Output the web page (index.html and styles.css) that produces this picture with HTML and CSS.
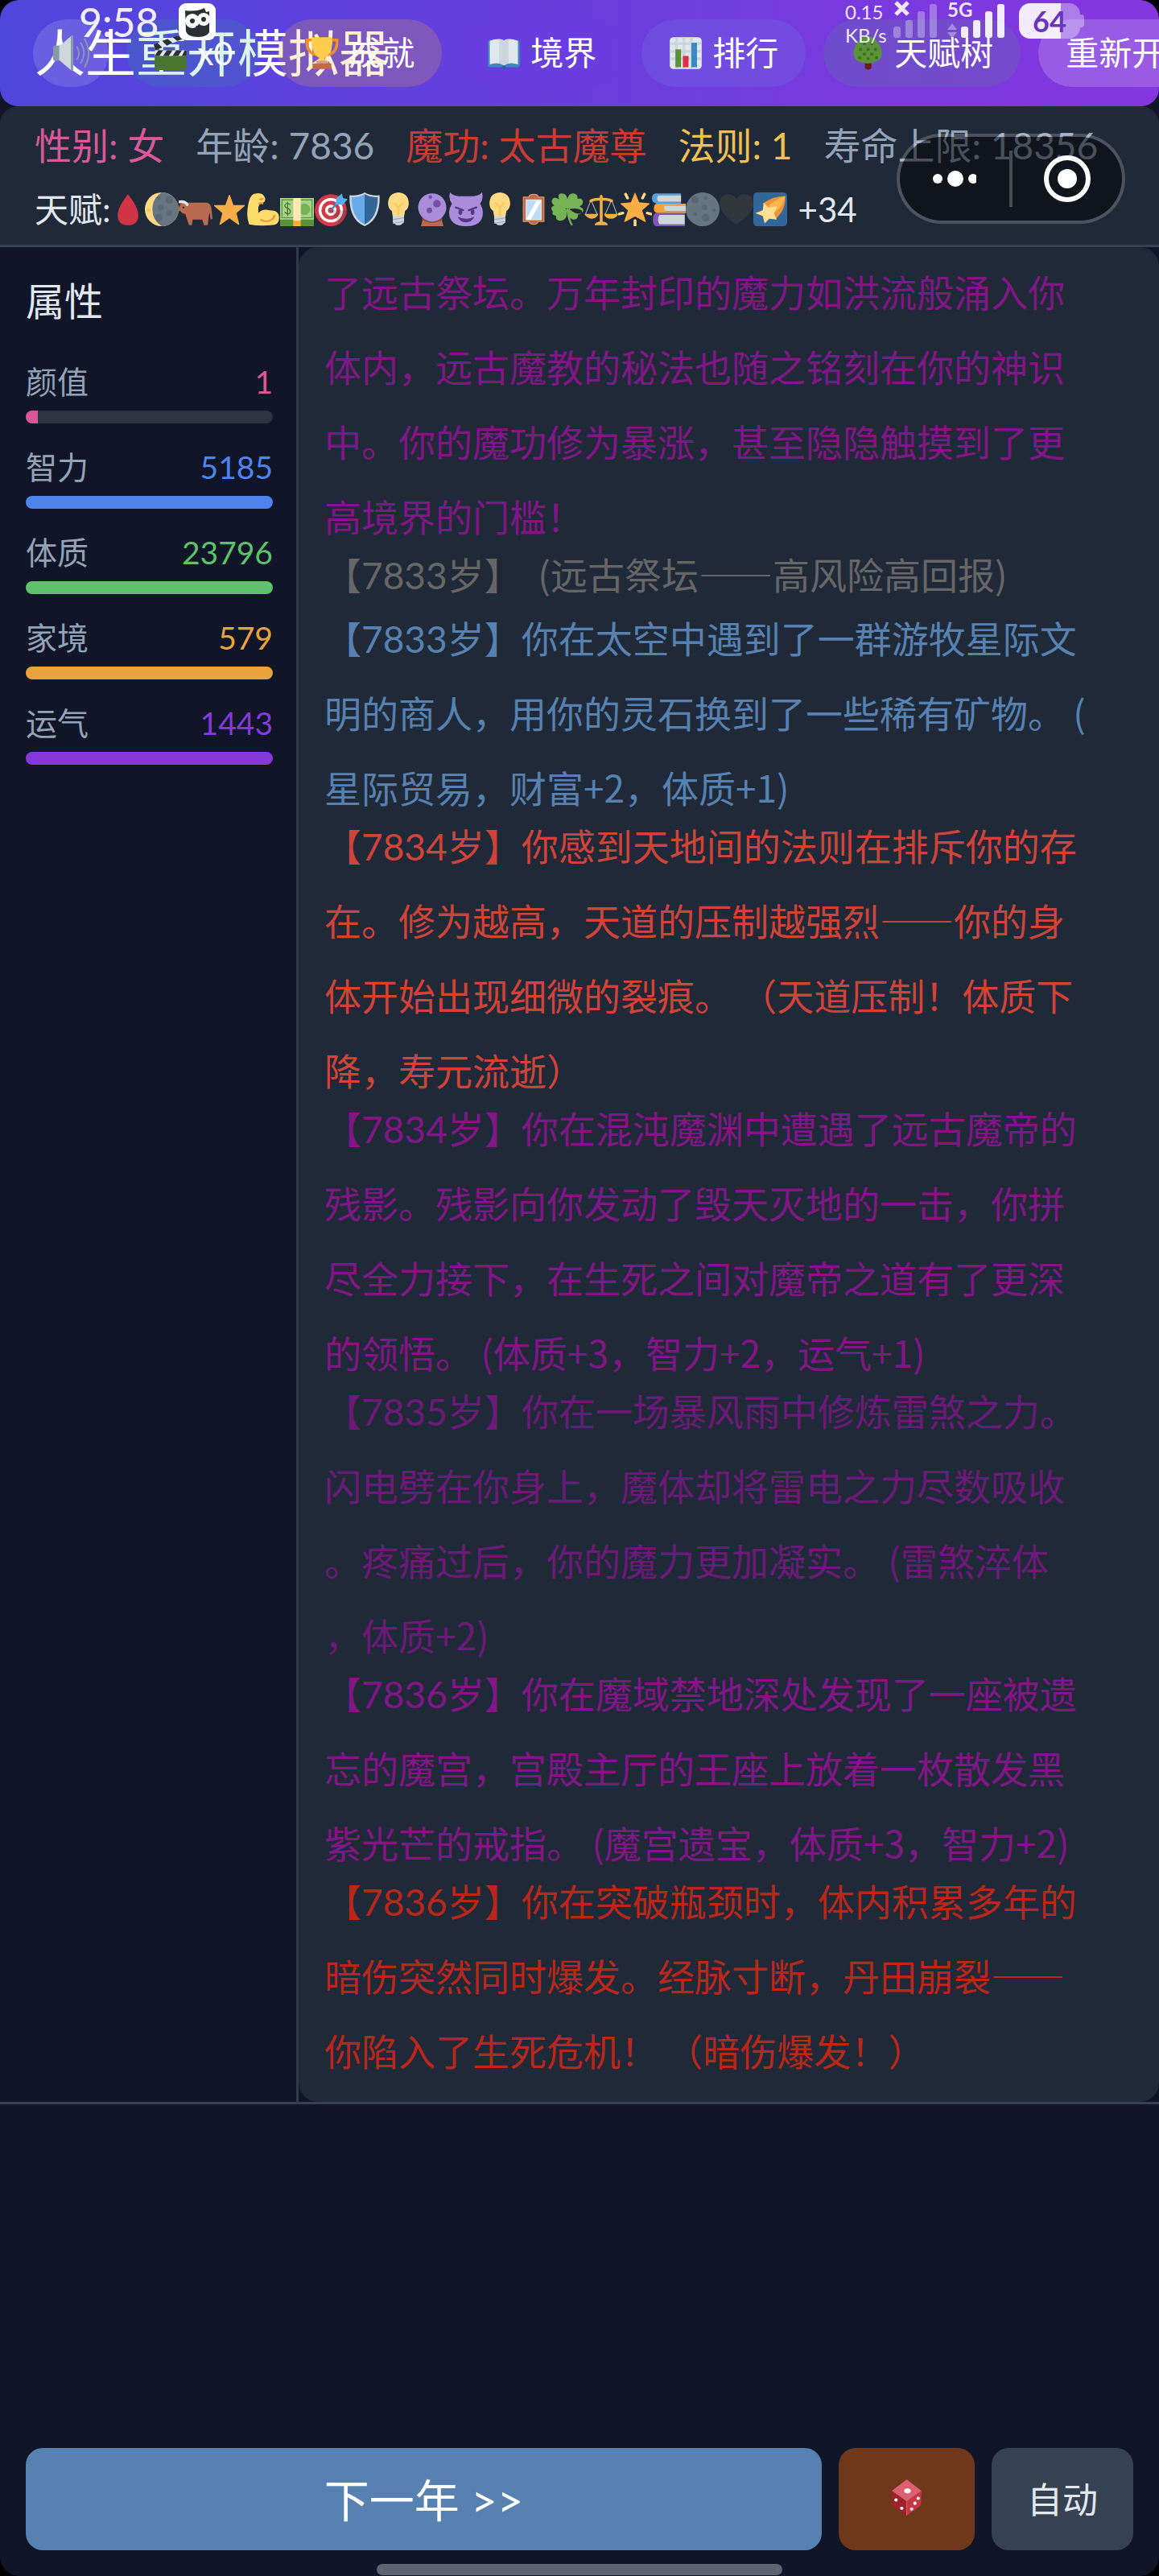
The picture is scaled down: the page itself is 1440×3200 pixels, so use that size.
FILE: index.html
```html
<!DOCTYPE html>
<html lang="zh-CN">

<head>
    <meta charset="UTF-8">
    <meta name="viewport" content="width=device-width, initial-scale=1">
    <title>人生重开模拟器</title>
    <link rel="stylesheet" href="styles.css">
</head>

<body>

    <!-- 图标 -->
    <svg class="sprite" aria-hidden="true">
        <symbol id="i-sound" viewBox="0 0 48 48">
            <rect x="1" y="14" width="12" height="20" rx="3" fill="#8899a6"/>
            <path d="M9 15 24 2q3-2 3 1v42q0 3-3 1L9 33z" fill="#ccd6dd"/>
            <path d="M24 2q3-2 3 1v42q0 3-3 1z" fill="#8899a6"/>
            <path d="M32 16q5 8 0 16M37 11q8 13 0 26M42 6q10 18 0 36" fill="none" stroke="#8c96ad" stroke-width="2" stroke-linecap="round"/>
        </symbol>
        <symbol id="i-film" viewBox="0 0 36 36">
            <path d="M1 15h34v18q0 3-3 3H4q-3 0-3-3z" fill="#4b7430"/>
            <path d="M1 15h34v6H1z" fill="#e1e8ed"/>
            <path d="M5 15h5l-4 6H1zM14 15h6l-4 6h-6zM24 15h6l-4 6h-6zM33 15h2v6h-5z" fill="#292f33"/>
            <path d="M0 9 31-3l2 5L2 15z" fill="#e1e8ed"/>
            <path d="m0 9 4-2 5 5-7 3zM9 5l6-2 5 4-6 3zM20 1l6-2 5 4-6 2z" fill="#292f33"/>
        </symbol>
        <symbol id="i-cup" viewBox="0 0 36 36">
            <path d="M9 4H2q-1 14 11 16M27 4h7q1 14-11 16" fill="none" stroke="#f19020" stroke-width="3"/>
            <path d="M7 1h22q1 17-8 22v5h-6v-5Q6 18 7 1z" fill="#ffcc4d"/>
            <path d="M12 26h12v5H12z" fill="#d99e82"/>
            <path d="M8 29h20v6H8z" fill="#c1694f"/>
        </symbol>
        <symbol id="i-book" viewBox="0 0 36 36">
            <path d="M1 6q0-2 2-2h30q2 0 2 2v25q0 2-2 2H3q-2 0-2-2z" fill="#3b88c3"/>
            <path d="M3 5Q13 1 18 5v26q-6-4-15-1zM33 5Q23 1 18 5v26q6-4 15-1z" fill="#e1e8ed"/>
            <path d="M13 3q4 0 5 2v26q-2-2-5-2zM23 3q-4 0-5 2v26q2-2 5-2z" fill="#ccd6dd"/>
            <circle cx="18" cy="33" r="2" fill="#226699"/>
        </symbol>
        <symbol id="i-chart" viewBox="0 0 36 36">
            <rect x="1" y="1" width="34" height="34" rx="4" fill="#e1e8ed"/>
            <path d="M1 8h34M1 16h34M1 24h34M8 1v33M16 1v33M24 1v33" stroke="#ccd6dd" stroke-width="3"/>
            <path d="M7 14h6v19H7z" fill="#5c913b"/>
            <path d="M15 21h6v12h-6z" fill="#dd2e44"/>
            <path d="M24 7h6v26h-6z" fill="#3b88c3"/>
        </symbol>
        <symbol id="i-tree" viewBox="0 0 36 36">
            <path d="M15 25h7v9q-3 3-7 0z" fill="#662113"/>
            <path d="M18 0q8 0 13 10 5 11-2 16-5 3-11 3t-11-3Q0 21 5 10 10 0 18 0z" fill="#5c913b"/>
            <path d="M13 8h3M21 8h3M9 14h3M17 14h3M25 14h3M13 19h3M21 19h3M8 23h3M17 24h3M26 23h3" stroke="#3e721d" stroke-width="3"/>
        </symbol>
        <symbol id="i-drop" viewBox="0 0 36 36">
            <path d="M18 2q11 14 11 22 0 11-11 11T7 24Q7 16 18 2z" fill="#d03445"/>
        </symbol>
        <symbol id="i-moon" viewBox="0 0 36 36">
            <circle cx="18" cy="18" r="18" fill="#ffd983"/>
            <path d="M18 0a18 18 0 0 1 0 36Q8 30 8 18T18 0z" fill="#66757f"/>
            <g fill="#5b6876"><circle cx="26" cy="8" r="4"/><circle cx="17" cy="16" r="3"/><circle cx="26" cy="22" r="3"/><circle cx="15" cy="27" r="4"/><circle cx="15" cy="6" r="2"/></g>
            <circle cx="4" cy="19" r="2" fill="#f4c265"/>
        </symbol>
        <symbol id="i-ox" viewBox="0 0 36 36">
            <path d="M2 12q4-3 9-1h19q5 1 5 8l1 9-2 1-1-8-1 5-1 9h-4l-2-6H15l-1 6h-3l-4-12q-3 0-5-3-3 0-2-3z" fill="#b86b50"/>
            <path d="M1 10q6-1 8 3" fill="none" stroke="#e1e8ed" stroke-width="3" stroke-linecap="round"/>
            <circle cx="5" cy="16" r="1" fill="#292f33"/>
        </symbol>
        <symbol id="i-star" viewBox="0 0 36 36">
            <path d="m18 3 4 11h12l-9 8 3 12-10-7-10 7 3-12-9-8h12z" fill="#f8ae46" stroke="#f8ae46" stroke-linejoin="round"/>
        </symbol>
        <symbol id="i-arm" viewBox="0 0 36 36">
            <path d="M3 34Q-1 24 3 9q2-8 8-8 7-1 9 5 1 5-5 6-3 2-2 10 4-5 12-3 10 0 10 8 0 8-9 8-13 1-23-1z" fill="#fddc6b"/>
            <path d="M15 29q5 3 10 1 5-2 5-6M14 7q3 1 4-1M13 12q3-1 5 0" fill="none" stroke="#ef9645" stroke-width="2"/>
        </symbol>
        <symbol id="i-money" viewBox="0 0 36 36">
            <path d="M0 8h36v28H0z" fill="#5c913b"/>
            <path d="M0 6h36v23H0z" fill="#a7d28b"/>
            <path d="M2 8h32v19H2z" fill="none" stroke="#5c913b" stroke-width="1"/>
            <circle cx="26" cy="18" r="6" fill="#77b255"/>
            <path d="M11 13q-5-3-6 1 0 2 3 3t3 4q-2 4-6 0M8 10v15" fill="none" stroke="#3e721d" stroke-width="1"/>
            <path d="M14 6h8v24h-8z" fill="#ffe8b6"/><path d="M14 30h8v6h-8z" fill="#ffac33"/>
        </symbol>
        <symbol id="i-target" viewBox="0 0 36 36">
            <circle cx="18" cy="19" r="17" fill="#d13a49"/><circle cx="18" cy="19" r="13" fill="#fff"/>
            <circle cx="18" cy="19" r="10" fill="#d13a49"/><circle cx="18" cy="19" r="6" fill="#fff"/>
            <circle cx="18" cy="19" r="3" fill="#d13a49"/>
            <path d="M18 19 27 33q8-5 8-14z" fill="#292f33" opacity=".2"/>
            <path d="M18 19 30 5" stroke="#3b88c3" stroke-width="2"/>
            <path d="m23 13 1-7 6-5 1 5 5 1-5 6z" fill="#55acee"/>
        </symbol>
        <symbol id="i-shield" viewBox="0 0 36 36">
            <path d="M18 0q7 4 16 3 1 26-16 33Q1 29 2 3q9 1 16-3z" fill="#ccd6dd"/>
            <path d="M18 2Q11 6 4 5q0 22 14 29z" fill="#67ace8"/>
            <path d="M18 2q7 4 14 3 0 22-14 29z" fill="#336699"/>
        </symbol>
        <symbol id="i-bulb" viewBox="0 0 36 36">
            <path d="M18 0q11 1 11 12 0 5-4 8l-1 6H12l-1-6q-4-3-4-8Q7 1 18 0z" fill="#ffd983"/>
            <path d="m13 11 5 5 5-5M18 16v9" fill="none" stroke="#fbca55" stroke-width="2"/>
            <path d="M12 25h12v7l-4 3h-4l-4-3z" fill="#ccd6dd"/>
            <path d="m12 29 12-2M12 33l12-2" stroke="#99aab5" stroke-width="1"/>
        </symbol>
        <symbol id="i-orb" viewBox="0 0 36 36">
            <path d="M8 28h20l2 8H6z" fill="#b86b50"/>
            <path d="M8 26q10 8 20 0l1 3q-11 7-22 0z" fill="#8a4b38"/>
            <circle cx="18" cy="16" r="15" fill="#aa8dd8"/>
            <g fill="#744eaa"><circle cx="16" cy="5" r="2"/><circle cx="23" cy="12" r="4"/><circle cx="15" cy="19" r="3"/></g>
        </symbol>
        <symbol id="i-devil" viewBox="0 0 36 36">
            <path d="M1 0q2 3 9 4h16q7-1 9-4 2 7-2 12 3 5 3 9 0 15-18 15T0 21q0-4 3-9Q-1 7 1 0z" fill="#aa8dd8"/>
            <path d="m7 16 8 3M29 16l-8 3" fill="none" stroke="#553788" stroke-width="2" stroke-linecap="round"/>
            <path d="M9 26q9 4 18 0-3 6-9 6t-9-6z" fill="#553788"/>
            <ellipse cx="12" cy="21" rx="2" ry="3" fill="#553788"/><ellipse cx="25" cy="21" rx="2" ry="3" fill="#553788"/>
        </symbol>
        <symbol id="i-mirror" viewBox="0 0 36 36">
            <path d="M7 5h6q0-3 5-3 5 0 5 3h6v26h-6q-1 3-5 3t-5-3H7z" fill="#c1694f" stroke="#e09a50"/>
            <path d="M10 8h16v21H10z" fill="#bbddf5" stroke="#e1e8ed"/>
            <path d="M21 9h5L15 29h-5z" fill="#fff"/>
        </symbol>
        <symbol id="i-clover" viewBox="0 0 36 36">
            <path d="M18 17Q9 16 9 7 7 1 12 1t6 6q1-6 6-6t5 6q0 8-11 10zM17 17Q7 25 2 20q-3-4 2-6-5-4-1-8Q8 3 17 17zM19 17q9-13 14-10 4 4-2 8 6 3 3 6-5 5-15-4zM17 18q2 10-5 12-7 1-6-5-6-1-3-5 5-4 14-2zM19 18q-2 9 5 11 6 0 5-5 6-2 4-5-5-3-14-1z" fill="#77b255"/>
            <path d="M18 17q1 12 5 18" fill="none" stroke="#77b255" stroke-width="2"/>
        </symbol>
        <symbol id="i-scale" viewBox="0 0 36 36">
            <path d="M7 8 1 24M7 8l7 16M29 8l-7 16M29 8l6 16" stroke="#99aab5" stroke-width="1"/>
            <path d="M0 23h15q-2 5-7 5t-8-5zM21 23h15q-2 5-8 5t-7-5z" fill="#f8ae46"/>
            <path d="M7 9q3-2 11-2 8 0 11 2M18 4v28" fill="none" stroke="#f8ae46" stroke-width="3" stroke-linecap="round"/>
            <path d="M11 35q0-4 7-4t7 4z" fill="#f8ae46"/>
        </symbol>
        <symbol id="i-glow" viewBox="0 0 36 36">
            <path d="m18 1 4 10 11 1-8 7 4 12-11-6-11 6 4-12-8-7 11-1z" fill="#f8ae46" stroke="#f8ae46" stroke-linejoin="round"/>
            <path d="m8 2 2 4M28 2l-2 4M1 23l4-1M35 23l-4-1M18 30v5" stroke="#ffd983" stroke-width="3" stroke-linecap="round"/>
        </symbol>
        <symbol id="i-books" viewBox="0 0 36 36">
            <path d="M31 1H5Q0 1 0 6t5 6h26v-2H7V3h24z" fill="#55a0e0"/><path d="M7 3h24v7H7q-3-3 0-7z" fill="#ccd6dd"/>
            <path d="M36 12H6q-4 0-4 5t4 5h30v-2H14v-6h22z" fill="#f4a23c"/><path d="M14 14h22v6H14q-2-3 0-6z" fill="#ccd6dd"/>
            <path d="M35 22H5q-4 0-4 7t4 7h30v-2H8V24h27z" fill="#7f55b8"/><path d="M8 24h27v10H8q-3-5 0-10z" fill="#ccd6dd"/>
        </symbol>
        <symbol id="i-newmoon" viewBox="0 0 36 36">
            <circle cx="18" cy="18" r="18" fill="#66757f"/>
            <g fill="#5b6876"><circle cx="10" cy="8" r="4"/><circle cx="21" cy="6" r="2"/><circle cx="20" cy="16" r="3"/><circle cx="30" cy="19" r="2"/><circle cx="21" cy="27" r="4"/><circle cx="10" cy="23" r="2"/></g>
        </symbol>
        <symbol id="i-heart" viewBox="0 0 36 36">
            <path d="M18 7q3-5 9-5 9 1 9 10 0 10-18 22Q0 22 0 12 0 3 9 2q6 0 9 5z" fill="#31373d"/>
        </symbol>
        <symbol id="i-shoot" viewBox="0 0 36 36">
            <rect width="36" height="36" rx="4" fill="#336699"/>
            <path d="M10 12Q20 4 34 4q1 14-10 24z" fill="#e9963a"/>
            <path d="M16 14Q24 7 34 4q-3 12-11 17z" fill="#ffb54d"/>
            <path d="m11 11 5 5 9-1-3 8 3 6-8-1-5 5-2-8-8-3 8-3z" fill="#ffdf90"/>
        </symbol>
        <symbol id="i-dice" viewBox="0 0 36 44">
            <path d="M18 0 36 14 18 27 0 14z" fill="#dd6071"/>
            <path d="m0 14 18 13v17L1 32z" fill="#a0202c"/>
            <path d="M36 14 18 27v17l17-12z" fill="#c63746"/>
            <path d="M18 27v17" stroke="#dd6071" stroke-width="1"/>
            <g fill="#fff"><ellipse cx="19" cy="14" rx="4" ry="3"/><circle cx="5" cy="25" r="2"/><circle cx="12" cy="35" r="2"/><circle cx="32" cy="23" r="2"/><circle cx="28" cy="29" r="2"/><circle cx="24" cy="36" r="2"/></g>
        </symbol>
        <symbol id="i-owl" viewBox="0 0 46 46">
            <rect width="46" height="46" rx="9" fill="#fff"/>
            <path d="M8 9q14 2 24-3l2 5 4-1v26q-3 6-14 6-13 0-15-7z" fill="#292f33"/>
            <circle cx="17" cy="22" r="9" fill="#fff"/><circle cx="31" cy="20" r="8" fill="#fff"/>
            <circle cx="17" cy="22" r="3" fill="#292f33"/><circle cx="31" cy="20" r="3" fill="#292f33"/>
            <path d="m21 28 3 5 4-5z" fill="#292f33"/>
        </symbol>
    </svg>

    <div class="app">

        <header class="header">
            <h1>人生重开模拟器</h1>

            <nav class="menu">
                <button class="pill pill-sound" aria-label="声音"><svg><use href="#i-sound"/></svg></button>
                <button class="pill pill-film"><svg><use href="#i-film"/></svg>x0</button>
                <button class="pill pill-cup"><svg><use href="#i-cup"/></svg>成就</button>
                <button class="pill pill-book"><svg><use href="#i-book"/></svg>境界</button>
                <button class="pill pill-chart"><svg><use href="#i-chart"/></svg>排行</button>
                <button class="pill pill-tree"><svg><use href="#i-tree"/></svg>天赋树</button>
                <button class="pill pill-restart">重新开始</button>
            </nav>

            <!-- 手机状态栏 -->
            <div class="status">
                <span class="clock">9:58</span>
                <svg class="owl"><use href="#i-owl"/></svg>
                <span class="speed">0.15<br>KB/s</span>
                <svg class="signal signal-off" viewBox="0 0 54 48">
                    <path d="m3 3 15 15M18 3 3 18" stroke="#fff" stroke-width="5"/>
                    <g fill="#fff" opacity=".35"><rect y="33" width="9" height="14" rx="3"/><rect x="15" y="25" width="9" height="22" rx="3"/><rect x="30" y="14" width="9" height="33" rx="3"/><rect x="45" y="5" width="9" height="42" rx="3"/></g>
                </svg>
                <div class="signal-5g">
                    <span>5G</span>
                    <svg class="signal" viewBox="0 0 72 48">
                        <path d="m6 29 6 8H0zM6 48l6-8H0z" fill="#fff" opacity=".4"/>
                        <g fill="#fff"><rect x="17" y="33" width="9" height="14" rx="3"/><rect x="32" y="25" width="9" height="22" rx="3"/><rect x="47" y="14" width="9" height="33" rx="3"/><rect x="62" y="5" width="9" height="42" rx="3"/></g>
                    </svg>
                </div>
                <span class="battery">64</span>
            </div>
        </header>

        <section class="info">
            <div class="info-row">
                <span class="c-pink">性别: 女</span>
                <span class="c-gray">年龄: 7836</span>
                <span class="c-red">魔功: 太古魔尊</span>
                <span class="c-gold">法则: 1</span>
                <span class="c-gray">寿命上限: 18356</span>
            </div>
            <div class="talents">
                <span class="talents-name">天赋:</span>
                <svg><use href="#i-drop"/></svg>
                <svg><use href="#i-moon"/></svg>
                <svg><use href="#i-ox"/></svg>
                <svg><use href="#i-star"/></svg>
                <svg><use href="#i-arm"/></svg>
                <svg><use href="#i-money"/></svg>
                <svg><use href="#i-target"/></svg>
                <svg><use href="#i-shield"/></svg>
                <svg><use href="#i-bulb"/></svg>
                <svg><use href="#i-orb"/></svg>
                <svg><use href="#i-devil"/></svg>
                <svg><use href="#i-bulb"/></svg>
                <svg><use href="#i-mirror"/></svg>
                <svg><use href="#i-clover"/></svg>
                <svg><use href="#i-scale"/></svg>
                <svg><use href="#i-glow"/></svg>
                <svg><use href="#i-books"/></svg>
                <svg><use href="#i-newmoon"/></svg>
                <svg><use href="#i-heart"/></svg>
                <svg><use href="#i-shoot"/></svg>
                <span class="talents-more">+34</span>
            </div>

            <!-- 小程序胶囊 -->
            <div class="capsule">
                <button aria-label="更多">
                    <svg width="54" height="24"><g fill="#fff"><circle cx="6" cy="12" r="6"/><circle cx="28" cy="12" r="10"/><circle cx="50" cy="12" r="6"/></g></svg>
                </button>
                <button aria-label="关闭">
                    <svg width="60" height="60"><circle cx="30" cy="30" r="26" fill="none" stroke="#fff" stroke-width="6"/><circle cx="30" cy="30" r="12" fill="#fff"/></svg>
                </button>
            </div>
        </section>

        <main class="main">

            <aside class="stats">
                <h2>属性</h2>
                <div class="stat c-pink">
                    <div class="stat-head"><span>颜值</span><b>1</b></div>
                    <div class="bar"><i style="width: 5%"></i></div>
                </div>
                <div class="stat c-blue">
                    <div class="stat-head"><span>智力</span><b>5185</b></div>
                    <div class="bar"><i style="width: 100%"></i></div>
                </div>
                <div class="stat c-green">
                    <div class="stat-head"><span>体质</span><b>23796</b></div>
                    <div class="bar"><i style="width: 100%"></i></div>
                </div>
                <div class="stat c-orange">
                    <div class="stat-head"><span>家境</span><b>579</b></div>
                    <div class="bar"><i style="width: 100%"></i></div>
                </div>
                <div class="stat c-purple">
                    <div class="stat-head"><span>运气</span><b>1443</b></div>
                    <div class="bar"><i style="width: 100%"></i></div>
                </div>
            </aside>

            <section class="log">
                <p class="magic">了远古祭坛。万年封印的魔力如洪流般涌入你体内，远古魔教的秘法也随之铭刻在你的神识中。你的魔功修为暴涨，甚至隐隐触摸到了更高境界的门槛！</p>
                <p class="note"><span class="age">【7833岁】</span>&nbsp; (远古祭坛——高风险高回报)</p>
                <p class="trade"><span class="age">【7833岁】</span>你在太空中遇到了一群游牧星际文明的商人，用你的灵石换到了一些稀有矿物。 (星际贸易，财富+2，体质+1)</p>
                <p class="warn"><span class="age">【7834岁】</span>你感到天地间的法则在排斥你的存在。修为越高，天道的压制越强烈——你的身体开始出现细微的裂痕。 （天道压制！体质下降，寿元流逝）</p>
                <p class="magic"><span class="age">【7834岁】</span>你在混沌魔渊中遭遇了远古魔帝的残影。残影向你发动了毁天灭地的一击，你拼尽全力接下，在生死之间对魔帝之道有了更深的领悟。 (体质+3，智力+2，运气+1)</p>
                <p class="magic-dark"><span class="age">【7835岁】</span>你在一场暴风雨中修炼雷煞之力。闪电劈在你身上，魔体却将雷电之力尽数吸收。疼痛过后，你的魔力更加凝实。 (雷煞淬体<br>，体质+2)</p>
                <p class="magic"><span class="age">【7836岁】</span>你在魔域禁地深处发现了一座被遗忘的魔宫，宫殿主厅的王座上放着一枚散发黑紫光芒的戒指。 (魔宫遗宝，体质+3，智力+2)</p>
                <p class="danger"><span class="age">【7836岁】</span>你在突破瓶颈时，体内积累多年的暗伤突然同时爆发。经脉寸断，丹田崩裂——你陷入了生死危机！ （暗伤爆发！）</p>
            </section>

        </main>

        <footer class="actions">
            <button class="btn btn-next">下一年 &gt;&gt;</button>
            <button class="btn btn-dice" aria-label="随机"><svg><use href="#i-dice"/></svg></button>
            <button class="btn btn-auto">自动</button>
            <div class="home-bar"></div>
        </footer>

    </div>

</body>

</html>
```
FILE: styles.css
```css
* {
    box-sizing: border-box;
}

body {
    margin: 0;
    background: #000;
    color: #e2e8f0;
    font-family: "Lato", "Noto Sans CJK SC", sans-serif;
}

h1,
h2,
p {
    margin: 0;
    font-weight: normal;
}

button {
    margin: 0;
    border: 0;
    padding: 0;
    background: none;
    color: #fff;
    font-family: inherit;
}

.sprite {
    position: absolute;
    width: 0;
    height: 0;
}

.app {
    display: flex;
    flex-direction: column;
    min-height: 100vh;
    background: #101527;
    border-radius: 24px;
    overflow: hidden;
}

.c-pink { color: #d95998; }
.c-gray { color: #94a3b8; }
.c-red { color: #c93c35; }
.c-gold { color: #f0c050; }
.c-blue { color: #4f83ee; }
.c-green { color: #5fc26a; }
.c-orange { color: #e8a33d; }
.c-purple { color: #8539dd; }

/* 顶部 */
.header {
    position: relative;
    padding: 0 43px;
    border-radius: 22px;
    background: linear-gradient(90deg, #4f46dc, #8536df);
    overflow: hidden;
}

.header h1 {
    color: #fff;
    font-size: 63px;
    line-height: 130px;
    padding-bottom: 2px;
    white-space: nowrap;
}

.menu {
    position: absolute;
    top: 24px;
    left: 41px;
    display: flex;
    gap: 22px;
}

.pill {
    display: flex;
    flex: none;
    align-items: center;
    gap: 12px;
    height: 84px;
    padding: 0 34px;
    border-radius: 42px;
    font-size: 41px;
    line-height: 84px;
    white-space: nowrap;
}

.pill svg {
    width: 42px;
    height: 42px;
    overflow: visible;
}

.pill-sound {
    padding: 0 22px;
    background: rgba(255, 255, 255, 0.14);
}

.pill-sound svg {
    width: 50px;
    height: 46px;
}

.pill-film { background: rgba(16, 185, 129, 0.15); }
.pill-cup { background: rgba(245, 180, 60, 0.2); }
.pill-book { background: rgba(110, 60, 225, 0.3); }
.pill-chart { background: rgba(120, 170, 235, 0.15); }
.pill-tree { background: rgba(70, 180, 100, 0.15); }
.pill-restart { background: rgba(255, 255, 255, 0.18); }

.status {
    position: absolute;
    top: 0;
    left: 98px;
    right: 98px;
    display: flex;
    color: rgba(255, 255, 255, 0.9);
}

.clock {
    width: 124px;
    font-size: 50px;
    font-weight: 500;
    line-height: 54px;
}

.owl {
    width: 46px;
    height: 46px;
    margin: 4px auto 0 0;
}

.speed {
    width: 60px;
    font-size: 24px;
    line-height: 29px;
}

.signal {
    display: block;
    height: 48px;
    opacity: 0.9;
}

.signal-off {
    width: 54px;
}

.signal-5g {
    position: relative;
    width: 72px;
    margin: 0 17px 0 13px;
}

.signal-5g span {
    position: absolute;
    top: 0;
    left: 0;
    font-size: 24px;
    font-weight: bold;
    line-height: 24px;
}

.battery {
    position: relative;
    width: 76px;
    height: 44px;
    margin-top: 4px;
    border-radius: 14px;
    background: linear-gradient(90deg, rgba(255, 255, 255, 0.9) 68%, rgba(255, 255, 255, 0.35) 68%);
    color: #6a35bd;
    font-size: 36px;
    font-weight: bold;
    line-height: 44px;
    text-align: center;
}

.battery::after {
    content: "";
    position: absolute;
    top: 14px;
    left: 76px;
    width: 5px;
    height: 16px;
    border-radius: 0 4px 4px 0;
    background: rgba(255, 255, 255, 0.35);
}

/* 人物信息 */
.info {
    position: relative;
    padding: 14px 43px 4px;
    border-bottom: 3px solid #374151;
    border-radius: 22px 22px 0 0;
    background: #202938;
}

.info-row {
    display: flex;
    gap: 39px;
    font-size: 46px;
    line-height: 70px;
    white-space: nowrap;
}

.talents {
    display: flex;
    align-items: center;
    height: 80px;
    margin-top: 4px;
    font-size: 42px;
    line-height: 80px;
}

.talents svg {
    flex: none;
    width: 42px;
    height: 42px;
}

.talents-more {
    margin-left: 14px;
}

.capsule {
    position: absolute;
    top: 34px;
    right: 42px;
    display: flex;
    width: 284px;
    height: 112px;
    border: 4px solid rgba(255, 255, 255, 0.2);
    border-radius: 56px;
    background: rgba(0, 0, 0, 0.5);
    background-clip: padding-box;
}

.capsule button {
    display: flex;
    flex: 1;
    align-items: center;
    justify-content: center;
}

.capsule::before {
    content: "";
    order: 1;
    width: 4px;
    margin: 17px 0;
    background: #484b52;
}

.capsule button:last-child {
    order: 2;
}

/* 属性 + 日志 */
.main {
    display: flex;
    border-bottom: 3px solid #374151;
}

.stats {
    flex: none;
    width: 371px;
    padding: 35px 29px 35px 32px;
    border-right: 3px solid #303a49;
}

.stats h2 {
    margin-bottom: 41px;
    font-size: 48px;
    line-height: 64px;
}

.stat {
    margin-bottom: 27px;
}

.stat-head {
    display: flex;
    justify-content: space-between;
    font-size: 39px;
    line-height: 54px;
}

.stat-head span {
    color: #94a3b8;
}

.stat-head b {
    font-weight: normal;
}

.bar {
    height: 16px;
    margin-top: 9px;
    border-radius: 8px;
    background: #2d3440;
    overflow: hidden;
}

.bar i {
    display: block;
    height: 100%;
    background: currentColor;
}

.log {
    flex: 1;
    padding: 8px 80px 18px 32px;
    border-radius: 24px;
    background: #202938;
    font-family: "Noto Sans CJK SC", sans-serif;
    font-size: 46px;
    line-height: 93px;
    line-break: anywhere;
    text-spacing-trim: space-all;
}

.log p {
    margin-bottom: -21px;
}

.log p:last-child {
    margin-bottom: 0;
}

.log .note {
    margin-bottom: -14px;
    color: #666;
}

.age {
    font-family: "Lato", "Noto Sans CJK SC", sans-serif;
    line-height: 1;
}

.magic { color: #811786; }
.magic-dark { color: #6c1a78; }
.trade { color: #5681b1; }
.warn { color: #d04338; }
.danger { color: #b9271b; }

/* 底部按钮 */
.actions {
    position: relative;
    display: flex;
    gap: 21px;
    margin-top: auto;
    padding: 32px;
}

.btn {
    height: 127px;
    padding-bottom: 4px;
    border-radius: 21px;
    font-size: 44px;
}

.btn-next {
    flex: 1;
    background: #5681b1;
    font-size: 56px;
}

.btn-dice {
    width: 169px;
    background: #6f381a;
}

.btn-dice svg {
    display: block;
    width: 37px;
    height: 45px;
    margin: 0 auto;
}

.btn-auto {
    width: 176px;
    background: #364152;
    color: #e2e8f0;
}

.home-bar {
    position: absolute;
    bottom: 1px;
    left: 50%;
    width: 504px;
    height: 14px;
    margin-left: -252px;
    border-radius: 7px;
    background: #5f6270;
}
```
